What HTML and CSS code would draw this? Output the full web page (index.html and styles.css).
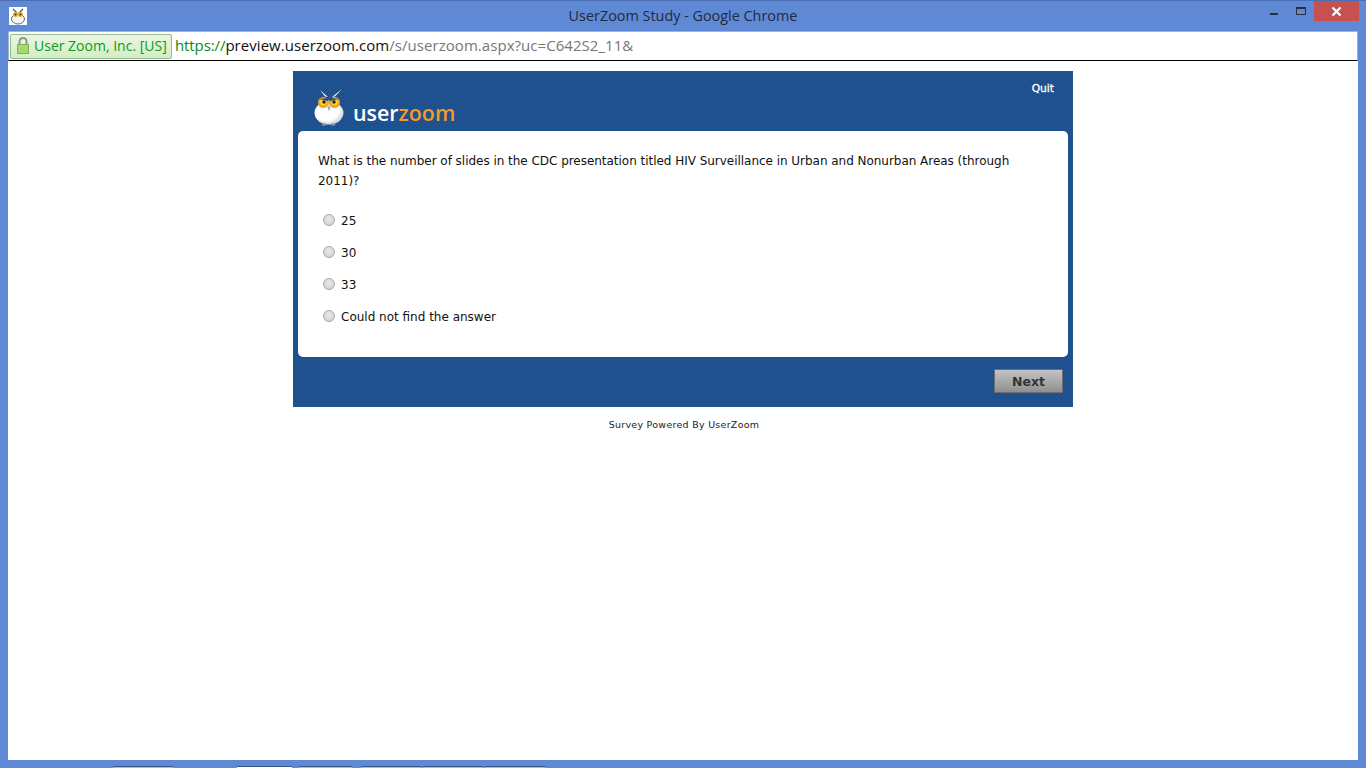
FILE: index.html
```html
<!DOCTYPE html>
<html lang="en">
<head>
<meta charset="utf-8">
<title>UserZoom Study - Google Chrome</title>
<link rel="stylesheet" href="styles.css">
</head>
<body>
<div class="window">
  <header class="titlebar">
    <svg class="favicon" width="18" height="18" viewBox="0 0 18 18">
      <rect width="18" height="18" fill="#fff"/>
      <path d="M4 2 L8 6 M14 2 L10 6" stroke="#4a5a70" stroke-width="1.2" fill="none"/>
      <ellipse cx="9" cy="12" rx="6.5" ry="5" fill="#f4f6fa" stroke="#5a6a80" stroke-width="1"/>
      <circle cx="6.5" cy="7.5" r="2.5" fill="#f0b020"/>
      <circle cx="11.5" cy="7.5" r="2.5" fill="#f0b020"/>
      <circle cx="6.5" cy="7.5" r="1" fill="#333"/>
      <circle cx="11.5" cy="7.5" r="1" fill="#333"/>
    </svg>
    <div class="title">UserZoom Study - Google Chrome</div>
    <div class="controls">
      <span class="minimize"></span>
      <span class="maximize"></span>
      <span class="close">
        <svg width="11" height="9" viewBox="0 0 11 9"><path d="M1.5 .5 L9.5 8.5 M9.5 .5 L1.5 8.5" stroke="#fff" stroke-width="2.2" fill="none"/></svg>
      </span>
    </div>
  </header>
  <div class="addressbar">
    <div class="ev-badge">
      <svg width="14" height="19" viewBox="0 0 14 19">
        <path d="M3.5 9 V5.5 a3.5 3.5 0 0 1 7 0 V9" fill="none" stroke="#8a9a88" stroke-width="2"/>
        <rect x="1.5" y="8.5" width="11" height="9" fill="#a4dc6c" stroke="#7fb05a"/>
      </svg>
      <span>User Zoom, Inc. [US]</span>
    </div>
    <div class="url"><span class="scheme">https://</span><span class="host">preview.userzoom.com</span><span class="path">/s/userzoom.aspx?uc=C642S2_11&amp;</span></div>
  </div>
  <main class="viewport">
    <section class="survey">
      <div class="survey-head">
        <div class="logo">
          <svg width="34" height="38" viewBox="0 0 34 38">
            <defs>
              <radialGradient id="body" cx="0.4" cy="0.4" r="0.7">
                <stop offset="0.6" stop-color="#ffffff"/>
                <stop offset="1" stop-color="#b9c2cf"/>
              </radialGradient>
            </defs>
            <path d="M7 2 L15 9 L12 8.5 Z M29 1 L19 9 L22 8.5 Z" fill="#eef2f7"/>
            <ellipse cx="16" cy="25" rx="14.5" ry="11.5" fill="url(#body)"/>
            <circle cx="10.5" cy="14.5" r="5.5" fill="#f2a51a"/>
            <circle cx="21.5" cy="14.5" r="5.5" fill="#f2a51a"/>
            <circle cx="10.5" cy="14" r="3.2" fill="#f9d64a"/>
            <circle cx="21.5" cy="14" r="3.2" fill="#f9d64a"/>
            <circle cx="11" cy="14" r="1.7" fill="#222"/>
            <circle cx="21" cy="14" r="1.7" fill="#222"/>
            <path d="M6 11 L15 13 L15 10 Z M26 11 L17 13 L17 10 Z" fill="#1d4e91"/>
            <path d="M16 17 L14.5 20 L16 23 L17.5 20 Z" fill="#8fb0d0"/>
            <ellipse cx="11" cy="36.5" rx="2.5" ry="1.2" fill="#7f93ad"/>
            <ellipse cx="20" cy="36.5" rx="2.5" ry="1.2" fill="#7f93ad"/>
          </svg>
          <span class="wordmark"><span class="word-user">user</span><span class="word-zoom">zoom</span></span>
        </div>
        <a class="quit">Quit</a>
      </div>
      <div class="card">
        <p class="question">What is the number of slides in the CDC presentation titled HIV Surveillance in Urban and Nonurban Areas (through 2011)?</p>
        <ul class="options">
          <li class="option"><span class="radio"></span><span>25</span></li>
          <li class="option"><span class="radio"></span><span>30</span></li>
          <li class="option"><span class="radio"></span><span>33</span></li>
          <li class="option"><span class="radio"></span><span>Could not find the answer</span></li>
        </ul>
      </div>
      <div class="survey-foot">
        <button class="next">Next</button>
      </div>
    </section>
    <p class="powered">Survey Powered By UserZoom</p>
  </main>
  <div class="taskbar-peek">
    <span class="peek p1"></span><span class="peek p2"></span><span class="peek p3"></span><span class="peek p4"></span><span class="peek p5"></span><span class="peek p6"></span>
  </div>
</div>
</body>
</html>
```
FILE: styles.css
```css
* { box-sizing: border-box; }
html, body { margin: 0; padding: 0; height: 100%; overflow: hidden; }
body { background: #5f8ad6; font-family: "DejaVu Sans", sans-serif; }

.window {
  width: 1366px;
  height: 768px;
  display: flex;
  flex-direction: column;
  background: #5f89d5;
  border-top: 1px solid #4a6fb4;
}

.titlebar {
  height: 30px;
  flex: none;
  position: relative;
  display: flex;
  align-items: flex-start;
}
.favicon { position: absolute; left: 9px; top: 6px; }
.title {
  flex: 1;
  text-align: center;
  font: 14.4px/29px "Open Sans", sans-serif;
  color: #1f2a3c;
}
.controls {
  position: absolute;
  right: 7px;
  top: 0;
  display: flex;
  align-items: flex-start;
}
.minimize { width: 8px; height: 2px; background: #2a2f38; margin: 12px 18px 0 0; }
.maximize { width: 10px; height: 8px; border: 1px solid #2a2f38; border-top-width: 2px; margin: 6px 8px 0 0; }
.close {
  width: 45px;
  height: 20px;
  background: #c75050;
  display: flex;
  align-items: center;
  justify-content: center;
}

.addressbar {
  height: 30px;
  flex: none;
  margin: 0 8px;
  background: #fff;
  border: 1px solid #9fb2cf;
  border-bottom: 1px solid #000;
  display: flex;
  align-items: center;
  padding-left: 1px;
  font: 15px "Open Sans", sans-serif;
}
.ev-badge {
  height: 25px;
  width: 162px;
  display: flex;
  align-items: center;
  gap: 4px;
  padding-left: 5px;
  padding-bottom: 1px;
  background: linear-gradient(#eaf6e2, #d4edc6);
  border: 1px solid #93bd8a;
  border-radius: 2px;
  color: #0c9a1a;
  font-size: 14px;
  white-space: nowrap;
}
.url { margin: 0 0 2px 3px; white-space: nowrap; letter-spacing: .05px; }
.scheme { color: #0a8a1a; letter-spacing: -.1px; }
.host { color: #111; }
.path { color: #777; }

.viewport {
  height: 699px;
  flex: none;
  margin: 0 8px;
  background: #fff;
  display: flex;
  flex-direction: column;
  align-items: center;
  padding-top: 10px;
}

.survey {
  width: 780px;
  height: 336px;
  display: flex;
  flex-direction: column;
  background: repeating-linear-gradient(135deg, #1b4c8f 0, #1b4c8f 1.414px, #23558f 1.414px, #23558f 2.828px);
}
.survey-head {
  height: 60px;
  flex: none;
  display: flex;
  justify-content: space-between;
  align-items: flex-start;
  padding: 0 19px 0 20px;
}
.logo { display: flex; align-items: flex-end; height: 55px; }
.wordmark { font: 600 21.4px/26px "Open Sans", sans-serif; margin-left: 6px; }
.word-user { color: #fff; }
.word-zoom { color: #f39a21; }
.quit { color: #fff; font-size: 10.7px; font-weight: 400; -webkit-text-stroke: .3px #fff; line-height: 14px; margin-top: 11px; }

.card {
  flex: none;
  height: 226px;
  margin: 0 5px;
  background: #fff;
  border-radius: 5px;
  padding: 20px 20px 0;
  color: #111;
  font-size: 12px;
}
.question { margin: 0; line-height: 20px; width: 700px; letter-spacing: -.03px; }
.options { list-style: none; margin: 14px 0 0; padding: 0 0 0 5px; }
.option { height: 32px; display: flex; align-items: center; gap: 6px; }
.radio {
  width: 12px;
  height: 12px;
  margin-bottom: 2px;
  border-radius: 50%;
  background: radial-gradient(circle at 50% 40%, #e8e8e8, #cfcfcf);
  border: 1px solid #a9a9a9;
}

.survey-foot {
  flex: 1;
  display: flex;
  justify-content: flex-end;
  align-items: flex-start;
  padding: 12px 10px 0 0;
}
.next {
  width: 69px;
  height: 24px;
  padding: 0;
  background: linear-gradient(#c4c4c4, #8f8f8f);
  border: 1px solid #6d6d6d;
  color: #333;
  font: 700 12.5px "DejaVu Sans", sans-serif;
}

.powered {
  margin: 11px 0 0;
  padding-left: 2px;
  font-size: 9.5px;
  letter-spacing: .27px;
  line-height: 13px;
  color: #222;
}

.taskbar-peek { flex: 1; position: relative; }
.peek { position: absolute; bottom: 0; height: 2px; background: #a9bcd9; border-top: 1px solid #38558a; }
.p1 { left: 113px; width: 60px; }
.p2 { left: 237px; width: 55px; background: #fff; }
.p3 { left: 299px; width: 53px; }
.p4 { left: 361px; width: 60px; }
.p5 { left: 423px; width: 60px; }
.p6 { left: 485px; width: 60px; }
```
